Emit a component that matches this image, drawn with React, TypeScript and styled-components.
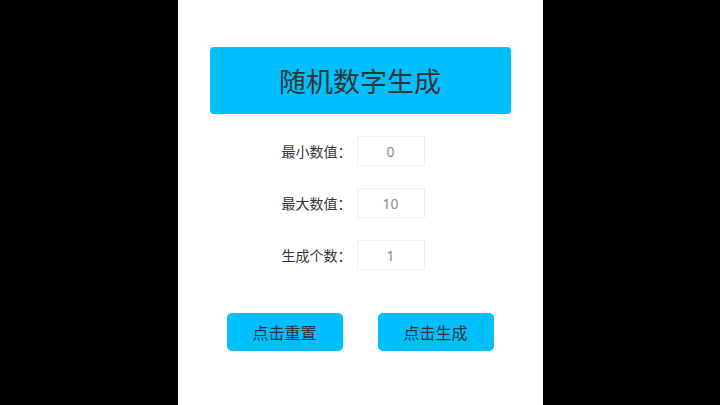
import React from "react";
import styled, { createGlobalStyle } from "styled-components";

const GlobalStyle = createGlobalStyle`
  html, body {
    margin: 0;
    padding: 0;
    background: #000;
    font-family: "Noto Sans CJK SC", "Noto Sans", sans-serif;
  }
`;

const fields = [
  { label: "最小数值：", value: "0" },
  { label: "最大数值：", value: "10" },
  { label: "生成个数：", value: "1" },
];

export default function App() {
  return (
    <>
      <GlobalStyle />
      <Screen>
        <Panel>
          <Title>随机数字生成</Title>
          <Form>
            {fields.map((f) => (
              <Row key={f.label}>
                <Label>{f.label}</Label>
                <Input defaultValue={f.value} />
              </Row>
            ))}
          </Form>
          <Actions>
            <Action>点击重置</Action>
            <Action>点击生成</Action>
          </Actions>
        </Panel>
      </Screen>
    </>
  );
}

const Screen = styled.div`
  width: 720px;
  height: 405px;
  display: flex;
  justify-content: center;
  background: #000;
`;

const Panel = styled.div`
  width: 365px;
  height: 405px;
  background: #fff;
  box-sizing: border-box;
  padding: 47px 32px 0 32px;
  display: flex;
  flex-direction: column;
`;

const Title = styled.div`
  height: 67px;
  border-radius: 4px;
  background: #00bfff;
  color: #333;
  font-size: 27px;
  display: flex;
  align-items: center;
  justify-content: center;
`;

const Form = styled.div`
  margin-top: 22px;
  display: flex;
  flex-direction: column;
  gap: 22px;
  padding-right: 14px;
`;

const Row = styled.div`
  display: flex;
  align-items: center;
  justify-content: center;
  height: 30px;
`;

const Label = styled.span`
  width: 70px;
  font-size: 14px;
  color: #333;
  margin-right: 5px;
  white-space: nowrap;
`;

const Input = styled.input`
  width: 68px;
  height: 30px;
  box-sizing: border-box;
  border: 1px solid #eee;
  outline: none;
  text-align: center;
  font-family: "Noto Sans", "Noto Sans CJK SC", sans-serif;
  font-size: 14px;
  color: #888;
  padding: 0;
`;

const Actions = styled.div`
  margin-top: 43px;
  display: flex;
  justify-content: center;
  gap: 35px;
`;

const Action = styled.button`
  width: 116px;
  height: 38px;
  border: none;
  border-radius: 5px;
  background: #00bfff;
  color: #333;
  font-family: "Noto Sans CJK SC", sans-serif;
  font-size: 16px;
  padding: 0;
`;
